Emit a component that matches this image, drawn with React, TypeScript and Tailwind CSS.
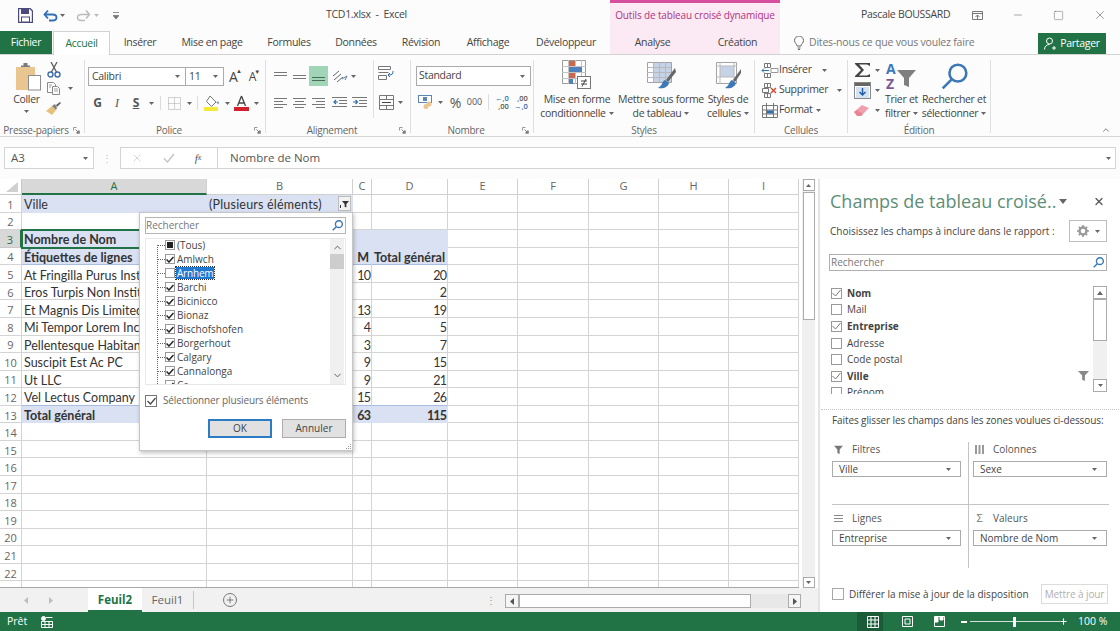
import { ReactNode } from "react";
import { X, Minus, Square, ChevronUp, Plus } from "lucide-react";
import clsx, { ClassValue } from "clsx";
import { twMerge } from "tailwind-merge";

const cn = (...inputs: ClassValue[]) => twMerge(clsx(inputs));

const Caret = ({ c = "#666" }: { c?: string }) => (
  <svg width="5" height="3" viewBox="0 0 5 3" className="shrink-0">
    <path d="M0 0h5L2.5 3z" fill={c} />
  </svg>
);

function Slot({ className, children }: { className?: string; children?: ReactNode }) {
  return <div className={cn("flex h-full shrink-0 items-center justify-center", className)}>{children}</div>;
}

const VSep = ({ className }: { className?: string }) => <div className={cn("w-px bg-[#dcdcdc]", className)} />;

function Lines({ d, w = 13, h = 11, c = "#777" }: { d: string; w?: number; h?: number; c?: string }) {
  return (
    <svg width={w} height={h} viewBox={`0 0 ${w} ${h}`} fill="none" stroke={c}>
      <path d={d} />
    </svg>
  );
}

function Launcher({ className }: { className: string }) {
  return (
    <svg width="7" height="7" viewBox="0 0 7 7" fill="none" className={cn("absolute top-[4px]", className)}>
      <path d="M.5 3.5v-3h3M6.5 3.5v3h-3" stroke="#999" />
      <path d="M2.5 2.5l3 3M3.5 5.5h2v-2" stroke="#777" />
    </svg>
  );
}

function Group({ label, launcher, className, children }: { label: string; launcher?: boolean; className?: string; children: ReactNode }) {
  return (
    <div className={cn("h-[73px] shrink-0 border-r border-[#dfdfdf]", className)}>
      <div className="flow-root h-[63px]">{children}</div>
      <div className={cn("relative h-[14px] text-center text-[10px] leading-[14px] tracking-[-0.25px] text-[#666]", launcher && "pr-[12px]")}>
        {label}
        {launcher && <Launcher className="right-[4px]" />}
      </div>
    </div>
  );
}

function Combo({ label, className }: { label: string; className?: string }) {
  return (
    <div className={cn("flex h-full shrink-0 items-center justify-between border border-[#ababab] bg-white pl-[3px] pr-[5px] text-[10.5px] tracking-[-0.3px] text-[#444]", className)}>
      <span>{label}</span>
      <Caret />
    </div>
  );
}

/* ---- ribbon drawings ---- */

const PasteIcon = () => (
  <svg width="26" height="28" viewBox="0 0 26 28">
    <rect x="1" y="4" width="19" height="23" fill="#e9c68f" />
    <path d="M6 4h9V2.5h-2.5V0h-4v2.5H6z" fill="#7b7b7b" />
    <rect x="13.5" y="12.5" width="12" height="14.5" fill="#fff" stroke="#8c8c8c" />
  </svg>
);
const CutIcon = () => (
  <svg width="14" height="16" viewBox="0 0 14 16" fill="none">
    <path d="M10 0L4.5 10M4 0l5.5 10" stroke="#5c5c5c" strokeWidth="1.3" />
    <circle cx="3.5" cy="12.5" r="2.5" stroke="#3d6fa8" strokeWidth="1.4" />
    <circle cx="10.5" cy="12.5" r="2.5" stroke="#3d6fa8" strokeWidth="1.4" />
  </svg>
);
const CopyIcon = () => (
  <svg width="13" height="13" viewBox="0 0 13 13" fill="#fff" stroke="#8a8a8a">
    <path d="M.5.5h6l2 2v8h-8z" />
    <path d="M5.5 4.5h5l2 2v6h-7z" />
    <path d="M2 3h3M2 5h2M7 7h4M7 9h4" stroke="#a0a0a0" />
  </svg>
);
const BrushIcon = () => (
  <svg width="15" height="13" viewBox="0 0 15 13">
    <path d="M0 9l6-5 4 4-4 5z" fill="#e7c07c" />
    <path d="M6 4l3-2 2 4-1 2z" fill="#7f7f7f" />
    <path d="M10 3l4-3 1 1-4 4z" fill="#5f5f5f" />
  </svg>
);
const BordersIcon = () => (
  <svg width="13" height="13" viewBox="0 0 13 13" fill="none" stroke="#a8a8a8" strokeDasharray="1 1">
    <path d="M.5.5h12v12H.5zM6.5.5v12M.5 6.5h12" />
  </svg>
);
const FillIcon = () => (
  <svg width="17" height="16" viewBox="0 0 17 16">
    <path d="M6 1l6 6-4.5 4.5-5-5z" fill="#fff" stroke="#777" />
    <path d="M12 7l2.5 2.5 .5-3z" fill="#6d92bd" />
    <rect x="0" y="12" width="14" height="4" fill="#f5ea3b" />
  </svg>
);
const FontColorIcon = () => (
  <svg width="15" height="16" viewBox="0 0 15 16">
    <path d="M7.5 1L3.5 11M7.5 1l4 10M5 8h5" fill="none" stroke="#444" strokeWidth="1.3" />
    <rect x="0" y="12" width="15" height="4" fill="#d2202c" />
  </svg>
);
const OrientIcon = () => (
  <svg width="17" height="15" viewBox="0 0 17 15" fill="none" stroke="#666">
    <path d="M2 7l6-5M3 11l7-6M6 13l6-5" />
    <path d="M11 10l5-3-2 4" stroke="#5b7ea8" />
  </svg>
);
const IndentIcon = ({ flip }: { flip?: boolean }) => (
  <svg width="15" height="11" viewBox="0 0 15 11" fill="none" stroke="#777">
    <path d="M0 .5h15M7 3.5h8M7 6.5h8M0 9.5h15" />
    <path d={flip ? "M1 5h4M3.5 3l2 2-2 2" : "M6 5H2M4 3L2 5l2 2"} stroke="#2e6fb0" strokeWidth="1.2" />
  </svg>
);
const WrapIcon = () => (
  <svg width="16" height="16" viewBox="0 0 16 16" fill="none" stroke="#777">
    <path d="M.5 1.5h12v3H.5zM.5 7.5h10M.5 10.5h8v4H.5z" />
    <path d="M15 6c0 3-1 4-4 4M12 8l-2 2 2 2" stroke="#2e6fb0" />
  </svg>
);
const MergeIcon = () => (
  <svg width="15" height="15" viewBox="0 0 15 15" fill="none" stroke="#777">
    <path d="M.5.5h14v14H.5zM.5 4.5h14M.5 10.5h14M7.5.5v4M7.5 10.5v4" />
    <path d="M3 7.5h9" stroke="#444" />
  </svg>
);
const CurrencyIcon = () => (
  <svg width="16" height="14" viewBox="0 0 16 14">
    <rect x=".5" y=".5" width="13" height="7" fill="#fff" stroke="#5d86b5" />
    <rect x="5" y="2" width="4" height="4" fill="#5d86b5" />
    <circle cx="11" cy="9" r="2.5" fill="#e9c68f" />
    <circle cx="8" cy="11.5" r="2.5" fill="#e9c68f" />
  </svg>
);
const CondIcon = () => (
  <svg width="31" height="32" viewBox="0 0 31 32">
    <path d="M.5.5h23v23H.5z" fill="#fff" stroke="#9a9a9a" />
    <path d="M6.500 0v24M13.500 0v24M19.500 0v24M0 6.500h24M0 12.500h24M0 18.500h24" stroke="#c4c4c4" />
    <rect x="7" y="1" width="6" height="5" fill="#c96a4e" />
    <rect x="7" y="7" width="13" height="5" fill="#4f81bd" />
    <rect x="7" y="13" width="6" height="5" fill="#c96a4e" />
    <rect x="7" y="19" width="4" height="5" fill="#4f81bd" />
    <rect x="15.500" y="16.500" width="13" height="12" fill="#fff" stroke="#777" />
    <path d="M19 21h6M19 24h6M24 19l-4 7.500" stroke="#444" fill="none" />
  </svg>
);
const TableBrushIcon = () => (
  <svg width="29" height="28" viewBox="0 0 29 28">
    <path d="M.5.5h24v20H.5z" fill="#fff" stroke="#a2a2a2" />
    <rect x="6" y="1" width="18" height="19" fill="#c6d3e6" />
    <path d="M6.500 0v20M12.500 0v20M18.500 0v20M0 5.500h24M0 10.500h24M0 15.500h24" stroke="#b9b9b9" />
    <path d="M28 6l-9 12 2 2 8-10z" fill="#666" />
    <path d="M18 18c-3 1-2 5-7 8 6 1 10-1 11-5z" fill="#3e78b8" />
  </svg>
);
const CellBrushIcon = () => (
  <svg width="25" height="28" viewBox="0 0 25 28">
    <path d="M.5.5h20v21H.5z" fill="#fff" stroke="#a2a2a2" />
    <rect x="4" y="4" width="14" height="11" fill="#c6d3e6" />
    <path d="M4 0v22M18 0v22M0 4h21M0 15h21" stroke="#b9b9b9" />
    <path d="M25 7l-8 11 2 2 6-9z" fill="#666" />
    <path d="M16 18c-3 1-2 5-7 8 6 1 10-1 11-5z" fill="#3e78b8" />
  </svg>
);
const InsertIcon = () => (
  <svg width="18" height="15" viewBox="0 0 18 15" fill="none" stroke="#777">
    <path d="M3.500.5h6v4h-6zM3.500 10.500h6v4h-6zM6.500.5v4M6.500 10.500v4" />
    <path d="M10 5.500h7v4h-7z" fill="#fff" stroke="#999" />
    <path d="M8 7.500H1M3 5.500l-2 2 2 2" stroke="#2e6fb0" />
  </svg>
);
const DeleteIcon = () => (
  <svg width="18" height="15" viewBox="0 0 18 15" fill="none" stroke="#777">
    <path d="M3.500.5h6v4h-6zM1.500 5.500h6v4h-6zM3.500 10.500h6v4h-6zM6.500.5v4M6.500 10.500v4" />
    <path d="M10 5l5 5M15 5l-5 5" stroke="#d2492a" strokeWidth="1.4" />
  </svg>
);
const FormatIcon = () => (
  <svg width="18" height="15" viewBox="0 0 18 15" fill="none" stroke="#777">
    <path d="M1.500 2.500h15v12h-15zM5.500 0v15M12.500 0v15M1 7h16M1 11h16" />
    <rect x="6" y="7.500" width="6" height="3" fill="#2e6fb0" stroke="none" />
  </svg>
);
const FillDownIcon = () => (
  <svg width="17" height="17" viewBox="0 0 17 17">
    <rect x=".5" y=".5" width="16" height="16" fill="#fff" stroke="#888" />
    <rect x="1" y="1" width="15" height="3" fill="#666" />
    <rect x="2" y="5" width="13" height="11" fill="#d5e3f3" />
    <path d="M8.500 6v7M5.500 10l3 3 3-3" fill="none" stroke="#1f5fa8" strokeWidth="1.5" />
  </svg>
);
const EraserIcon = () => (
  <svg width="16" height="13" viewBox="0 0 16 13">
    <path d="M0 8l8-7 7 3-8 8z" fill="#f0a0ac" />
    <path d="M0 8l3-2 6 4-2 2H3z" fill="#e98592" />
  </svg>
);
const SortIcon = () => (
  <svg width="34" height="32" viewBox="0 0 34 32">
    <text x="1" y="14" fontSize="14" fontWeight="700" fill="#3d78bd" fontFamily="'Open Sans',sans-serif">A</text>
    <text x="1" y="29" fontSize="14" fontWeight="700" fill="#7a5a9a" fontFamily="'Open Sans',sans-serif">Z</text>
    <path d="M12 10h19l-7 8v9l-5-2v-7z" fill="#7f7f7f" />
  </svg>
);
const Magnifier = ({ s = 12, c = "#3b78b5", w = 2 }: { s?: number; c?: string; w?: number }) => (
  <svg width={s} height={s} viewBox="0 0 24 24" fill="none" stroke={c} strokeWidth={w * (24 / s)}>
    <circle cx="15" cy="9" r="7.500" />
    <path d="M9.500 14.500L1.500 22.500" />
  </svg>
);
const Funnel = ({ w = 12, h = 12, c = "#888" }: { w?: number; h?: number; c?: string }) => (
  <svg width={w} height={h} viewBox="0 0 12 12">
    <path d="M0 1h12L7.500 6v6l-3-1.500V6z" fill={c} />
  </svg>
);

/* ---- top of the window ---- */

function TitleBar() {
  return (
    <div className="flex h-[30px] items-center whitespace-nowrap text-[10.5px] tracking-[-0.3px] text-[#444]">
      <Slot className="ml-[16px] w-[18px]">
        <svg width="15" height="15" viewBox="0 0 15 15">
          <path d="M.5.5h11.500l2.500 2.500v11.500H.5z" fill="#fff" stroke="#4a4a7d" strokeWidth="1.400" />
          <rect x="3" y="1" width="8" height="5" fill="#4a4a7d" />
          <rect x="3.500" y="9" width="8" height="5" fill="#fff" stroke="#4a4a7d" />
        </svg>
      </Slot>
      <Slot className="ml-[8px] w-[16px]">
        <svg width="15" height="13" viewBox="0 0 15 13" fill="none" stroke="#2f6fb3" strokeWidth="1.800">
          <path d="M1.500 5.500h8c3 0 4 1.500 4 3s-1 3-4 3H6M5 1.500l-3.500 4 3.500 4" />
        </svg>
      </Slot>
      <Slot className="ml-[1px] w-[7px]"><Caret /></Slot>
      <Slot className="ml-[9px] w-[16px]">
        <svg width="15" height="13" viewBox="0 0 15 13" fill="none" stroke="#bcbcbc" strokeWidth="1.500">
          <path d="M13.500 5.500h-8c-3 0-4 1.500-4 3s1 3 4 3H9M10 1.500l3.500 4-3.500 4" />
        </svg>
      </Slot>
      <Slot className="ml-[2px] w-[7px]"><Caret c="#bbb" /></Slot>
      <Slot className="ml-[8px] w-[15px]">
        <svg width="6" height="7" viewBox="0 0 6 7">
          <path d="M0 .5h6M0 3.500h6L3 7z" stroke="#777" strokeWidth=".8" fill="#777" />
        </svg>
      </Slot>
      <div className="w-[487px] shrink-0 text-center">TCD1.xlsx&nbsp; -&nbsp; Excel</div>
      <div className="flex h-full w-[170px] shrink-0 items-center justify-center border-t-[3px] border-[#d64f9f] bg-[#fbeaf3] pb-[3px] text-[10px] tracking-[-0.15px] text-[#b0337f]">
        Outils de tableau croisé dynamique
      </div>
      <div className="ml-[81px] w-[88px] shrink-0">Pascale BOUSSARD</div>
      <Slot className="w-[56px]">
        <svg width="11" height="9" viewBox="0 0 11 9" fill="none" stroke="#777">
          <path d="M.5.5h10v8H.5zM.5 2.500h10M5.500 8V4M3.500 6l2-2 2 2" />
        </svg>
      </Slot>
      <Slot className="w-[26px]"><Minus size={12} strokeWidth={1} color="#555" /></Slot>
      <Slot className="ml-[7px] w-[41px]"><Square size={11} strokeWidth={1} color="#555" /></Slot>
      <Slot className="w-[41px]"><X size={14} strokeWidth={1} color="#555" /></Slot>
    </div>
  );
}

const TABS = [
  { label: "Insérer", w: "w-[60px]" },
  { label: "Mise en page", w: "w-[84px]" },
  { label: "Formules", w: "w-[70px]" },
  { label: "Données", w: "w-[64px]" },
  { label: "Révision", w: "w-[66px]" },
  { label: "Affichage", w: "w-[68px]" },
  { label: "Développeur", w: "w-[88px]" },
];

function TabBar() {
  return (
    <div className="flex h-[25px] items-stretch whitespace-nowrap border-b border-[#d2d2d2] text-[10.5px] tracking-[-0.3px] text-[#444]">
      <div className="mt-[1px] flex w-[52px] shrink-0 items-center justify-center bg-[#217346] text-white">Fichier</div>
      <div className="relative z-10 ml-px mt-[1px] flex h-[24px] w-[57px] shrink-0 items-center justify-center border-x border-t border-[#d2d2d2] bg-white text-[#217346]">Accueil</div>
      {TABS.map((t) => (
        <div key={t.label} className={cn("flex shrink-0 items-center justify-center pt-[2px]", t.w)}>{t.label}</div>
      ))}
      <div className="flex w-[170px] shrink-0 bg-[#fbeaf3] pt-[2px]">
        <div className="flex w-[85px] items-center justify-center">Analyse</div>
        <div className="flex w-[85px] items-center justify-center">Création</div>
      </div>
      <div className="ml-[12px] flex w-[14px] shrink-0 items-center justify-center pt-[2px]">
        <svg width="10" height="14" viewBox="0 0 10 14" fill="none" stroke="#666">
          <path d="M3 10c0-2-2.500-3-2.500-5.500a4.500 4.500 0 0 1 9 0C9.500 7 7 8 7 10zM3.500 12h3M4 13.500h2" />
        </svg>
      </div>
      <div className="ml-[3px] flex w-[160px] shrink-0 items-center pt-[2px] tracking-[-0.2px] text-[#777]">Dites-nous ce que vous voulez faire</div>
      <div className="ml-[69px] mt-[3px] flex w-[68px] shrink-0 items-center justify-center gap-[4px] bg-[#217346] text-white">
        <svg width="12" height="13" viewBox="0 0 12 13" fill="none" stroke="#fff">
          <circle cx="5.500" cy="4" r="3" />
          <path d="M.5 12.500c0-3 2-5 5-5M8 11h4M10 9v4" />
        </svg>
        Partager
      </div>
    </div>
  );
}

function RibbonLine({ children }: { children: ReactNode }) {
  return <div className="flex items-center justify-center gap-[3px] whitespace-nowrap">{children}</div>;
}

function BigButton({ icon, lines, className }: { icon: ReactNode; lines: string[]; className: string }) {
  return (
    <div className={cn("flex shrink-0 flex-col items-center text-[10.5px] leading-[14px] tracking-[-0.3px] text-[#444]", className)}>
      <div className="flex h-[32px] items-center">{icon}</div>
      <RibbonLine>{lines[0]}</RibbonLine>
      <RibbonLine>
        {lines[1]}
        <Caret />
      </RibbonLine>
    </div>
  );
}

function Ribbon() {
  return (
    <div className="flex h-[82px] border-b border-[#d6d6d6] pt-[5px]">
      <Group label="Presse-papiers" launcher className="w-[85px]">
        <div className="flex">
          <div className="ml-[12px] flex w-[29px] flex-col items-center text-[10.5px] tracking-[-0.3px] text-[#444]">
            <div className="ml-[3px] mt-[3px]"><PasteIcon /></div>
            <div className="mt-[1px] leading-[14px]">Coller</div>
            <div className="mt-[4px]"><Caret /></div>
          </div>
          <div className="ml-[6px] flex flex-col">
            <Slot className="mt-[1px] h-[17px] w-[14px]"><CutIcon /></Slot>
            <div className="flex h-[20px] items-center gap-[8px]"><CopyIcon /><Caret /></div>
            <div className="ml-[-1px] flex h-[20px] items-center"><BrushIcon /></div>
          </div>
        </div>
      </Group>

      <Group label="Police" launcher className="w-[181px]">
        <div className="mt-[7px] flex h-[19px] pl-[3px]">
          <Combo label="Calibri" className="w-[98px]" />
          <Combo label="11" className="-ml-px w-[39px]" />
          <Slot className="w-[19px]">
            <span className="relative text-[14px] text-[#444]">A<span className="absolute -right-[4px] top-[2px] text-[6px] leading-none">▲</span></span>
          </Slot>
          <Slot className="w-[19px]">
            <span className="relative text-[12px] text-[#444]">A<span className="absolute -right-[4px] top-[1px] text-[6px] leading-none">▼</span></span>
          </Slot>
        </div>
        <div className="mt-[7px] flex h-[20px] items-center pl-[3px] text-[12px] text-[#555]">
          <Slot className="w-[19px] font-bold">G</Slot>
          <Slot className="w-[20px] font-['Liberation_Serif',serif] italic">I</Slot>
          <Slot className="w-[18px] font-bold underline">S</Slot>
          <Slot className="w-[12px]"><Caret /></Slot>
          <Slot className="w-[6px]"><VSep className="h-[14px]" /></Slot>
          <Slot className="w-[22px]"><BordersIcon /></Slot>
          <Slot className="w-[9px]"><Caret /></Slot>
          <Slot className="w-[7px]"><VSep className="h-[14px]" /></Slot>
          <Slot className="w-[22px]"><FillIcon /></Slot>
          <Slot className="w-[8px]"><Caret /></Slot>
          <Slot className="w-[21px]"><FontColorIcon /></Slot>
          <Slot className="w-[8px]"><Caret /></Slot>
        </div>
      </Group>

      <Group label="Alignement" launcher className="w-[145px]">
        <div className="flex h-full">
          <div className="w-[107px] pl-[4px]">
            <div className="mt-[6px] flex h-[20px]">
              <Slot className="w-[20px]"><Lines d="M0 1.500h13M0 4.500h13" /></Slot>
              <Slot className="w-[19px]"><Lines d="M0 4.500h13M0 7.500h13" /></Slot>
              <Slot className="w-[19px] bg-[#a0d5b8]"><Lines d="M0 6.500h13M0 9.500h13" c="#4d6b5b" /></Slot>
              <Slot className="w-[22px]"><OrientIcon /></Slot>
              <Slot className="w-[7px]"><Caret /></Slot>
            </div>
            <div className="mt-[6px] flex h-[20px]">
              <Slot className="w-[20px]"><Lines d="M0 1.500h13M0 4.500h9M0 7.500h13M0 10.500h9" /></Slot>
              <Slot className="w-[19px]"><Lines d="M0 1.500h13M2 4.500h9M0 7.500h13M2 10.500h9" /></Slot>
              <Slot className="w-[19px]"><Lines d="M0 1.500h13M4 4.500h9M0 7.500h13M4 10.500h9" /></Slot>
              <Slot className="w-[22px]"><IndentIcon /></Slot>
              <Slot className="w-[19px]"><IndentIcon flip /></Slot>
            </div>
          </div>
          <div className="mb-[5px] border-l border-[#dfdfdf]">
            <Slot className="mt-[3px] h-[20px] w-[24px]"><WrapIcon /></Slot>
            <div className="mt-[9px] flex h-[20px] items-center">
              <Slot className="w-[24px]"><MergeIcon /></Slot>
              <Caret />
            </div>
          </div>
        </div>
      </Group>

      <Group label="Nombre" launcher className="w-[123px]">
        <div className="ml-[5px] mt-[6px] flex h-[20px]">
          <Combo label="Standard" className="w-[115px] pl-[2px]" />
        </div>
        <div className="mt-[6px] flex h-[20px] pl-[6px] text-[#555]">
          <Slot className="w-[17px]"><CurrencyIcon /></Slot>
          <Slot className="w-[12px]"><Caret /></Slot>
          <Slot className="w-[19px] text-[14px]">%</Slot>
          <Slot className="w-[19px] text-[9px]">000</Slot>
          <Slot className="w-[8px]"><VSep className="h-[16px]" /></Slot>
          <Slot className="w-[20px]">
            <div className="flex flex-col items-end text-[7.5px] font-semibold leading-[8px]"><span className="text-[#2e6fb0]">←,0</span><span>,00</span></div>
          </Slot>
          <Slot className="w-[18px]">
            <div className="flex flex-col items-end text-[7.5px] font-semibold leading-[8px]"><span>,00</span><span className="text-[#2e6fb0]">→,0</span></div>
          </Slot>
        </div>
      </Group>

      <Group label="Styles" className="w-[221px]">
        <div className="flex">
          <BigButton icon={<CondIcon />} lines={["Mise en forme", "conditionnelle"]} className="w-[86px]" />
          <BigButton icon={<TableBrushIcon />} lines={["Mettre sous forme", "de tableau"]} className="w-[82px]" />
          <BigButton icon={<CellBrushIcon />} lines={["Styles de", "cellules"]} className="w-[52px]" />
        </div>
      </Group>

      <Group label="Cellules" className="w-[93px]">
        <div className="flex flex-col text-[10.5px] tracking-[-0.3px] text-[#444]">
          <div className="flex h-[20px] items-center pl-[5px]"><Slot className="w-[19px]"><InsertIcon /></Slot>Insérer<div className="ml-[10px]"><Caret /></div></div>
          <div className="flex h-[20px] items-center pl-[5px]"><Slot className="w-[19px]"><DeleteIcon /></Slot>Supprimer<div className="ml-[9px]"><Caret /></div></div>
          <div className="flex h-[20px] items-center pl-[5px]"><Slot className="w-[19px]"><FormatIcon /></Slot>Format<div className="ml-[3px]"><Caret /></div></div>
        </div>
      </Group>

      <Group label="Édition" className="w-[143px]">
        <div className="flex">
          <div className="flex w-[32px] shrink-0 flex-col pl-[6px]">
            <div className="flex h-[20px] items-center gap-[4px]">
              <svg width="17" height="16" viewBox="0 0 17 16"><path d="M1 1h15v3L13 2.500H5L10 8l-5 5.500h8L16 12v3H1v-1l6-6-6-6z" fill="#444" /></svg>
              <Caret />
            </div>
            <div className="flex h-[20px] items-center gap-[4px]"><FillDownIcon /><Caret /></div>
            <div className="flex h-[20px] items-center gap-[5px]"><EraserIcon /><Caret /></div>
          </div>
          <BigButton icon={<SortIcon />} lines={["Trier et", "filtrer"]} className="w-[43px]" />
          <BigButton icon={<Magnifier s={27} w={2.6} />} lines={["Rechercher et", "sélectionner"]} className="w-[62px]" />
        </div>
      </Group>

      <div className="flex flex-1 items-end justify-end pb-[1px] pr-[9px]">
        <ChevronUp size={10} strokeWidth={2} color="#666" />
      </div>
    </div>
  );
}

function FormulaBar() {
  return (
    <div className="flex h-[42px] items-start pl-[4px] pr-[4px] pt-[10px] text-[#555]">
      <div className="flex h-[22px] w-[90px] shrink-0 items-center justify-between border border-[#d4d4d4] bg-white pl-[6px] pr-[5px] text-[11.5px]">
        A3
        <Caret />
      </div>
      <div className="flex h-[22px] w-[26px] shrink-0 items-center justify-center text-[10px] leading-[5px] text-[#bbb]">⋮</div>
      <div className="flex h-[22px] w-[98px] shrink-0 items-center border border-[#d4d4d4] bg-white">
        <Slot className="w-[32px]"><X size={12} strokeWidth={1.4} color="#c4c4c4" /></Slot>
        <Slot className="w-[32px]">
          <svg width="12" height="10" viewBox="0 0 12 10" fill="none" stroke="#c4c4c4" strokeWidth="1.400"><path d="M1 5.500l3.500 3.500L11 1" /></svg>
        </Slot>
        <Slot className="w-[26px] font-['Liberation_Serif',serif] text-[11px] italic">f<span className="text-[8px]">x</span></Slot>
      </div>
      <div className="flex h-[22px] flex-1 items-center justify-between border border-l-0 border-[#d4d4d4] bg-white pl-[12px] pr-[4px] text-[11.5px]">
        Nombre de Nom
        <Caret />
      </div>
    </div>
  );
}

/* ---- the sheet ---- */

const COLS = ["A", "B", "C", "D", "E", "F", "G", "H", "I"];
const COL_W = ["w-[185px]", "w-[146px]", "w-[19px]", "w-[76px]", "w-[70px]", "w-[71px]", "w-[70px]", "w-[70px]", "w-[70px]"];

type Row = { a?: string; b?: string; c?: string; d?: string; bold?: boolean; blue?: number; line?: string };
const ROWS: Record<number, Row> = {
  1: { a: "Ville", b: "(Plusieurs éléments)", blue: 2 },
  3: { a: "Nombre de Nom", bold: true, blue: 4 },
  4: { a: "Étiquettes de lignes", c: "M", d: "Total général", bold: true, blue: 4, line: "border-b-[#a9bde0]" },
  5: { a: "At Fringilla Purus Inst", c: "10", d: "20" },
  6: { a: "Eros Turpis Non Instit", d: "2" },
  7: { a: "Et Magnis Dis Limited", c: "13", d: "19" },
  8: { a: "Mi Tempor Lorem Inc", c: "4", d: "5" },
  9: { a: "Pellentesque Habitan", c: "3", d: "7" },
  10: { a: "Suscipit Est Ac PC", c: "9", d: "15" },
  11: { a: "Ut LLC", c: "9", d: "21" },
  12: { a: "Vel Lectus Company", c: "15", d: "26", line: "border-b-[#a9bde0]" },
  13: { a: "Total général", c: "63", d: "115", bold: true, blue: 4 },
};

function SheetRow({ n }: { n: number }) {
  const row = ROWS[n] ?? {};
  const cells = [row.a, row.b, row.c, row.d];
  return (
    <div className={cn("flex h-[17.57px] shrink-0 font-['Lato',sans-serif] text-[12.5px] leading-[17px] text-[#333]", row.bold && "font-bold")}>
      <div className={cn("flex w-[22px] shrink-0 items-center justify-center border-b border-r pt-[2px] font-['Open_Sans',sans-serif] text-[11px] font-normal", n === 3 ? "border-r-2 border-b-[#c8c8c8] border-r-[#217346] bg-[#d8d8d8] text-[#217346]" : "border-[#d4d4d4] text-[#666]")}>
        {n}
      </div>
      {COLS.map((col, i) => {
        const blue = row.blue !== undefined && i < row.blue;
        const numeric = i >= 2;
        const digits = /^\d+$/.test(cells[i] ?? "");
        return (
          <div
            key={col}
            className={cn(
              "relative flex shrink-0 items-center whitespace-nowrap border-b border-r px-[2px] pt-[3px]",
              COL_W[i],
              numeric && "justify-end",
              digits && "pr-[1px] tracking-[-0.9px]",
              blue ? "border-r-transparent border-b-[#d9e1f2] bg-[#d9e1f2]" : "border-[#d4d4d4]",
              row.line && i < 4 && row.line,
              n === 3 && i === 0 && "z-10 outline-2 -outline-offset-1 outline-[#217346]",
              n === 1 && i === 1 && "justify-between tracking-[0.2px]",
            )}
          >
            {cells[i]}
            {n === 1 && i === 1 && (
              <div className="-mr-[1px] -mt-[3px] flex h-[15px] w-[13px] items-end justify-center gap-px border border-[#bdbdbd] bg-[#f2f2f2] pb-[2px]">
                <span className="h-[3px] w-px bg-[#333]" />
                <Funnel w={7} h={8} c="#333" />
              </div>
            )}
          </div>
        );
      })}
    </div>
  );
}

const CITIES = ["Amlwch", "Arnhem", "Barchi", "Bicinicco", "Bionaz", "Bischofshofen", "Borgerhout", "Calgary", "Cannalonga", "Ca"];

function TreeCheck({ state }: { state: "on" | "off" | "mixed" }) {
  return (
    <div className="relative flex h-[10px] w-[10px] shrink-0 items-center justify-center border border-[#9a9a9a] bg-white">
      {state === "on" && (
        <svg width="8" height="7" viewBox="0 0 8 7" fill="none" stroke="#222" strokeWidth="1.500"><path d="M.5 3.500l2.500 2.500L7.500 1" /></svg>
      )}
      {state === "mixed" && <div className="h-[6px] w-[6px] bg-[#222]" />}
    </div>
  );
}

function FilterDropdown() {
  return (
    <div className="absolute left-[139px] top-[33px] z-20 flex h-[239px] w-[214px] flex-col border border-[#c6c6c6] bg-white pl-[5px] pr-[6px] pt-[4px] font-['Open_Sans',sans-serif] text-[10px] text-[#444] shadow-[1px_2px_4px_rgba(0,0,0,0.25)]">
      <div className="flex h-[17px] shrink-0 items-center justify-between border border-[#b5b5b5] pr-[2px] text-[10px] text-[#777]">
        Rechercher
        <Magnifier s={11} w={1.400} />
      </div>
      <div className="relative mt-[4px] h-[147px] shrink-0 overflow-hidden border border-[#e8e8e8]">
        <div className="absolute bottom-0 left-[11px] top-[6px] border-l border-dotted border-[#666]" />
        <div className="-mt-px">
          {[{ label: "(Tous)", state: "mixed" as const }, ...CITIES.map((c) => ({ label: c, state: c === "Arnhem" ? ("off" as const) : ("on" as const) }))].map((r) => (
            <div key={r.label} className="flex h-[14px] items-center">
              <div className="ml-[11px] w-[8px] border-t border-dotted border-[#666]" />
              <TreeCheck state={r.state} />
              <span className={cn("ml-px px-px leading-[12px]", r.label === "Arnhem" && "bg-[#1f78d1] tracking-[-0.2px] text-white outline-1 outline-dotted outline-[#333]")}>
                {r.label}
              </span>
            </div>
          ))}
        </div>
        <div className="absolute inset-y-0 right-px flex w-[14px] flex-col items-center bg-[#f0f0f0]">
          <ChevronUp size={11} strokeWidth={2} color="#555" className="mt-[3px]" />
          <div className="mt-px h-[15px] w-full bg-[#cdcdcd]" />
          <ChevronUp size={11} strokeWidth={2} color="#555" className="mb-[3px] mt-auto rotate-180" />
        </div>
      </div>
      <div className="mt-[8px] flex items-center text-[10px] tracking-[-0.13px] text-[#666]">
        <div className="flex h-[12px] w-[12px] shrink-0 items-center justify-center border border-[#777]">
          <svg width="9" height="8" viewBox="0 0 9 8" fill="none" stroke="#444" strokeWidth="1.200"><path d="M.5 4l3 3L8.500 1" /></svg>
        </div>
        <span className="ml-[6px]">Sélectionner plusieurs éléments</span>
      </div>
      <div className="mt-[11px] flex justify-end gap-[10px] text-[10px]">
        <div className="flex h-[19px] w-[64px] items-center justify-center border-2 border-[#2b7cc5] bg-[#e1e1e1]">OK</div>
        <div className="flex h-[19px] w-[64px] items-center justify-center border border-[#adadad] bg-[#e1e1e1]">Annuler</div>
      </div>
      <div className="absolute bottom-[1px] right-[1px] grid grid-cols-3 gap-px">
        {[0, 1, 2, 3, 4, 5, 6, 7, 8].map((k) => (
          <span key={k} className={cn("h-px w-px", [2, 4, 5, 6, 7, 8].includes(k) ? "bg-[#999]" : "")} />
        ))}
      </div>
    </div>
  );
}

function Sheet() {
  return (
    <div className="relative flex h-[409px] overflow-hidden">
      <div className="flex w-[799px] shrink-0 flex-col overflow-hidden border-b border-[#a8a8a8]">
        <div className="flex h-[16px] shrink-0 font-['Open_Sans',sans-serif] text-[11px] text-[#666]">
          <div className="flex w-[22px] shrink-0 items-end justify-center border-b border-r border-[#c8c8c8] pb-[2px] pl-[3px]">
            <svg width="12" height="10" viewBox="0 0 12 10"><path d="M12 0v10H0z" fill="#d0d0d0" /></svg>
          </div>
          {COLS.map((col, i) => (
            <div
              key={col}
              className={cn("flex shrink-0 items-center justify-center border-r", COL_W[i], col === "A" ? "border-b-2 border-r-[#d0d0d0] border-b-[#217346] bg-[#d8d8d8] text-[#217346]" : "border-b border-[#d0d0d0]")}
            >
              {col}
            </div>
          ))}
        </div>
        {Array.from({ length: 23 }, (_, i) => (
          <SheetRow key={i} n={i + 1} />
        ))}
      </div>
      <FilterDropdown />
      <div className="ml-[3px] flex h-full w-[13px] shrink-0 flex-col items-center bg-[#f0f0f0]">
        <div className="flex h-[12px] w-[12px] shrink-0 items-center justify-center border border-[#ababab] bg-white"><svg width="5" height="3" viewBox="0 0 5 3"><path d="M0 3h5L2.500 0z" fill="#666" /></svg></div>
        <div className="mt-px h-[128px] w-[12px] border border-[#ababab] bg-white" />
        <div className="mt-auto flex h-[11px] w-[12px] shrink-0 items-center justify-center border border-[#ababab] bg-white"><Caret c="#666" /></div>
      </div>
    </div>
  );
}

function SheetTabs() {
  return (
    <div className="flex h-[24px] bg-[#f1f1f1] text-[11.5px] text-[#666]">
      <div className="flex w-[88px] shrink-0 items-center gap-[21px] pl-[24px] text-[#bbb]">
        <svg width="4" height="7" viewBox="0 0 4 7"><path d="M4 0v7L0 3.500z" fill="#bdbdbd" /></svg>
        <svg width="4" height="7" viewBox="0 0 4 7"><path d="M0 0v7l4-3.500z" fill="#bdbdbd" /></svg>
      </div>
      <div className="flex w-[54px] shrink-0 items-center justify-center border-b-2 border-[#217346] bg-white pt-[2px] font-bold text-[#217346]">Feuil2</div>
      <div className="my-[3px] flex w-[52px] shrink-0 items-center justify-center border-r border-[#c8c8c8]">Feuil1</div>
      <div className="ml-[29px] flex h-full w-[14px] shrink-0 items-center justify-center">
        <div className="flex h-[14px] w-[14px] items-center justify-center rounded-full border border-[#777]"><Plus size={10} strokeWidth={2} color="#666" /></div>
      </div>
      <div className="ml-[250px] flex h-full w-[8px] shrink-0 items-center justify-center text-[10px] leading-[5px] text-[#999]">⋮</div>
      <div className="ml-[10px] mt-[6px] flex h-[14px] w-[296px] shrink-0 items-stretch bg-[#e8e8e8]">
        <div className="flex w-[14px] shrink-0 items-center justify-center border border-[#ababab] bg-[#f5f5f5]">
          <svg width="4" height="7" viewBox="0 0 4 7"><path d="M4 0v7L0 3.500z" fill="#555" /></svg>
        </div>
        <div className="w-[232px] border border-[#ababab] bg-white" />
        <div className="ml-auto flex w-[13px] items-center justify-center border border-[#ababab] bg-[#f5f5f5]">
          <svg width="4" height="7" viewBox="0 0 4 7"><path d="M0 0v7l4-3.500z" fill="#555" /></svg>
        </div>
      </div>
    </div>
  );
}

/* ---- right pane ---- */

const FIELDS = [
  { label: "Nom", on: true },
  { label: "Mail", on: false },
  { label: "Entreprise", on: true },
  { label: "Adresse", on: false },
  { label: "Code postal", on: false },
  { label: "Ville", on: true },
  { label: "Prénom", on: false },
];

function PaneSelect({ label }: { label: string }) {
  return (
    <div className="mt-[4px] flex h-[16px] items-center justify-between border border-[#ababab] bg-white pl-[6px] pr-[9px] text-[#444]">
      {label}
      <Caret />
    </div>
  );
}

function Zone({ icon, label, select, className }: { icon: ReactNode; label: string; select: string; className?: string }) {
  return (
    <div className={className}>
      <div className="flex h-[15px] items-center text-[#555]">
        <Slot className="ml-[2px] w-[9px]">{icon}</Slot>
        <span className="ml-[9px]">{label}</span>
      </div>
      <PaneSelect label={select} />
    </div>
  );
}

function FieldPane() {
  return (
    <div className="flex w-[302px] shrink-0 flex-col border-l-2 border-[#e4e4e4] bg-white text-[10px] text-[#444]">
      <div className="flex h-[41px] shrink-0 items-center pl-[10px] pt-[3px]">
        <span className="w-[222px] whitespace-nowrap text-[18px] text-[#5d8e78]">Champs de tableau croisé..</span>
        <Slot className="ml-[6px] w-[10px]"><svg width="8" height="5" viewBox="0 0 8 5"><path d="M0 0h8L4 5z" fill="#666" /></svg></Slot>
        <Slot className="ml-[25px] w-[12px]"><X size={13} strokeWidth={2.4} color="#555" /></Slot>
      </div>
      <div className="flex h-[22px] shrink-0 items-center pl-[10px] pr-[13px]">
        Choisissez les champs à inclure dans le rapport :
        <div className="ml-auto flex h-[22px] w-[38px] items-center justify-center gap-[6px] border border-[#bdbdbd]">
          <svg width="12" height="12" viewBox="0 0 12 12"><circle cx="6" cy="6" r="3.500" fill="none" stroke="#999" strokeWidth="2.400" /><path d="M6 0v2M6 10v2M0 6h2M10 6h2M1.800 1.800l1.400 1.400M8.800 8.800l1.400 1.400M1.800 10.200l1.400-1.400M8.800 3.200l1.400-1.400" stroke="#999" strokeWidth="1.600" /></svg>
          <Caret />
        </div>
      </div>
      <div className="ml-[9px] mr-[13px] mt-[12px] flex h-[17px] shrink-0 items-center justify-between border border-[#b0b0b0] pl-[1px] pr-[2px] text-[#777]">
        Rechercher
        <Magnifier s={11} w={1.400} />
      </div>
      <div className="relative ml-[11px] mr-[13px] mt-[15px] h-[108px] shrink-0 overflow-hidden">
        <div className="-mt-px">
          {FIELDS.map((f) => (
            <div key={f.label} className={cn("flex h-[16.6px] items-center", f.on && "font-bold")}>
              <div className="flex h-[11px] w-[11px] shrink-0 items-center justify-center border border-[#9a9a9a]">
                {f.on && <svg width="9" height="8" viewBox="0 0 9 8" fill="none" stroke="#777"><path d="M.5 4l3 3L8.500 1" /></svg>}
              </div>
              <span className="ml-[5px]">{f.label}</span>
            </div>
          ))}
        </div>
        <div className="absolute right-0 top-0 flex h-[106px] w-[14px] flex-col bg-[#f0f0f0]">
          <div className="flex h-[13px] shrink-0 items-center justify-center border border-[#ababab] bg-white"><svg width="6" height="4" viewBox="0 0 6 4"><path d="M0 4h6L3 0z" fill="#666" /></svg></div>
          <div className="h-[42px] border border-[#ababab] bg-white" />
          <div className="mt-auto flex h-[13px] shrink-0 items-center justify-center border border-[#ababab] bg-white"><Caret /></div>
        </div>
        <div className="absolute right-[18px] top-[84px]"><Funnel w={11} h={11} c="#888" /></div>
      </div>
      <div className="mx-[1px] mt-[15px] shrink-0 border-t border-dotted border-[#c4c4c4]" />
      <div className="ml-[12px] mt-[2px] h-[16px] shrink-0 whitespace-nowrap leading-[16px] tracking-[-0.1px]">Faites glisser les champs dans les zones voulues ci-dessous:</div>
      <div className="ml-[12px] mr-[11px] mt-[14px] grid h-[126px] shrink-0 grid-cols-[137px_1fr] grid-rows-[63px_63px]">
        <Zone icon={<Funnel w={9} h={9} c="#777" />} label="Filtres" select="Ville" className="border-b border-r border-[#c4c4c4] pr-[7px]" />
        <Zone
          icon={<svg width="9" height="9" viewBox="0 0 9 9"><path d="M0 0h2v9H0zM3.500 0h2v9h-2zM7 0h2v9H7z" fill="#999" /></svg>}
          label="Colonnes"
          select="Sexe"
          className="border-b border-[#c4c4c4] pl-[4px] pr-[2px]"
        />
        <Zone
          icon={<svg width="9" height="7" viewBox="0 0 9 7"><path d="M0 0h9v1H0zM0 3h9v1H0zM0 6h9v1H0z" fill="#888" /></svg>}
          label="Lignes"
          select="Entreprise"
          className="border-r border-[#c4c4c4] pr-[7px] pt-[6px]"
        />
        <Zone icon={<span className="text-[11px] text-[#777]">Σ</span>} label="Valeurs" select="Nombre de Nom" className="pl-[4px] pr-[2px] pt-[6px]" />
      </div>
      <div className="ml-[12px] mr-[12px] mt-[16px] flex h-[20px] shrink-0 items-center">
        <div className="h-[12px] w-[12px] shrink-0 border border-[#a8a8a8]" />
        <span className="ml-[5px]">Différer la mise à jour de la disposition</span>
        <div className="ml-auto flex h-[20px] w-[67px] items-center justify-center border border-[#dcdcdc] tracking-[-0.1px] text-[#b0b0b0]">Mettre à jour</div>
      </div>
    </div>
  );
}

function StatusBar() {
  return (
    <div className="flex h-[19px] items-center bg-[#217346] text-[10.5px] text-white">
      <span className="ml-[7px] w-[30px]">Prêt</span>
      <svg width="12" height="12" viewBox="0 0 12 12" className="ml-[4px]" fill="none" stroke="#fff">
        <circle cx="2.500" cy="2.500" r="2" fill="#fff" />
        <path d="M5 1.500h6.500M.5 5.500h11v6H.5zM.5 8.500h11M4 5.500v6M8 5.500v6" />
      </svg>
      <Slot className="ml-[804px] w-[26px] bg-[#1a5c38] pl-[5px]">
        <svg width="12" height="12" viewBox="0 0 12 12" fill="none" stroke="#fff"><path d="M.5.5h11v11H.5zM4 .5v11M8 .5v11M.5 4h11M.5 8h11" /></svg>
      </Slot>
      <Slot className="ml-[11px] w-[26px]">
        <svg width="11" height="11" viewBox="0 0 11 11" fill="none" stroke="#fff"><path d="M.5.5h10v10H.5zM3 3h5v5H3z" /></svg>
      </Slot>
      <Slot className="ml-[6px] w-[26px]">
        <svg width="11" height="11" viewBox="0 0 11 11" fill="none" stroke="#fff"><path d="M.5.5h10v10H.5z" /><path d="M1 1h3v5H1zM6 1h3v3H6z" fill="#fff" /></svg>
      </Slot>
      <div className="ml-[9px] h-[2px] w-[6px] bg-white" />
      <div className="relative ml-[3px] flex w-[90px] items-center">
        <div className="h-px w-full bg-[#cfe3d8]" />
        <div className="absolute left-[43px] h-[10px] w-[3px] bg-white" />
      </div>
      <Plus size={9} strokeWidth={3} color="#fff" className="ml-[-1px]" />
      <span className="ml-[10px]">100 %</span>
    </div>
  );
}

export default function App() {
  return (
    <div className="flex h-[631px] w-[1120px] flex-col overflow-hidden bg-[#fcfcfc] font-['Open_Sans',sans-serif]">
      <TitleBar />
      <TabBar />
      <Ribbon />
      <FormulaBar />
      <div className="flex h-[433px] shrink-0">
        <div className="w-[818px] shrink-0 bg-white">
          <Sheet />
          <SheetTabs />
        </div>
        <FieldPane />
      </div>
      <StatusBar />
    </div>
  );
}
